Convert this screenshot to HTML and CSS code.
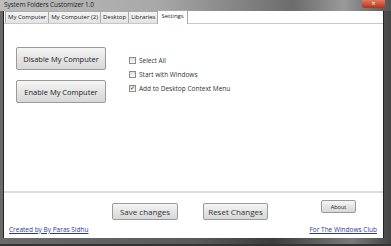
FILE: index.html
```html
<!DOCTYPE html>
<html lang="en">
  <head>
    <meta charset="UTF-8" />
    <title>System Folders Customizer 1.0</title>
    <link rel="stylesheet" href="styles.css">
  </head>
  <body>
    <div class="window">
      <div class="titlebar">
        <span class="title">System Folders Customizer 1.0</span>
        <span class="close">&#215;</span>
      </div>
      <div class="client">
        <div class="tabs">
          <span class="tab">My Computer</span>
          <span class="tab">My Computer (2)</span>
          <span class="tab">Desktop</span>
          <span class="tab">Libraries</span>
          <span class="tab active">Settings</span>
        </div>
        <div class="page">
          <div class="actions">
            <button class="btn big">Disable My Computer</button>
            <button class="btn big">Enable My Computer</button>
          </div>
          <div class="options">
            <label class="check"><span class="box"></span>Select All</label>
            <label class="check"><span class="box"></span>Start with Windows</label>
            <label class="check"><span class="box on">&#10003;</span>Add to Desktop Context Menu</label>
          </div>
        </div>
        <div class="footer">
          <a class="link" href="#">Created by By Paras Sidhu</a>
          <div class="center">
            <button class="btn wide">Save changes</button>
            <button class="btn wide">Reset Changes</button>
          </div>
          <div class="right">
            <button class="btn small">About</button>
            <a class="link" href="#">For The Windows Club</a>
          </div>
        </div>
      </div>
    </div>
  </body>
</html>
```

FILE: styles.css
```css
* {
  box-sizing: border-box;
}

html,
body {
  margin: 0;
  padding: 0;
  width: 391px;
  height: 246px;
  overflow: hidden;
  background: #555;
  font-family: "Open Sans", "DejaVu Sans", sans-serif;
}

.window {
  width: 391px;
  height: 246px;
  display: flex;
  flex-direction: column;
  background: linear-gradient(90deg, #6a6a6a, #5a5a5a 50%, #3c3c3c 70%, #7a7a7a 90%, #444);
  padding: 0 7px 6px 3px;
  border-bottom: 2px solid #333;
}

.titlebar {
  height: 11px;
  display: flex;
  align-items: flex-start;
  justify-content: space-between;
  margin: 0 -7px 0 -3px;
  background: linear-gradient(90deg, #bdbdbd, #a8a8a8 40%, #6c6c6c 75%, #9a9a9a 88%, #555);
}

.title {
  font-size: 6.5px;
  color: #1e1e1e;
  line-height: 10px;
  padding-left: 4px;
  letter-spacing: -0.1px;
}

.close {
  width: 23px;
  height: 8px;
  margin-right: 6px;
  border-radius: 0 0 3px 3px;
  background: linear-gradient(#e07a60, #b2321a);
  color: #fff;
  font-size: 7px;
  line-height: 8px;
  text-align: center;
}

.client {
  flex: 1;
  background: #fff;
  display: flex;
  flex-direction: column;
  border-left: 1px solid #222;
  border-right: 1px solid #222;
}

.tabs {
  display: flex;
  align-items: flex-end;
  height: 13px;
  padding-left: 1px;
  background: #fff;
  border-bottom: 1px solid #c8c8c8;
}

.tab {
  height: 12px;
  padding: 0 2px;
  font-size: 6px;
  line-height: 11px;
  color: #222;
  background: linear-gradient(#f4f4f4, #e2e2e2);
  border: 1px solid #aaa;
  border-bottom: none;
  margin-right: -1px;
}

.tab.active {
  height: 14px;
  background: #fff;
  margin-bottom: -1px;
  padding: 0 3px;
  line-height: 10px;
}

.page {
  height: 169px;
  display: flex;
  padding: 23px 0 0 12px;
  border-bottom: 2px solid #dcdcdc;
}

.actions {
  display: flex;
  flex-direction: column;
  gap: 10px;
}

.btn {
  font-family: inherit;
  color: #222;
  border: 1px solid #9a9a9a;
  border-radius: 2px;
  background: linear-gradient(#f6f6f6, #e4e4e4 50%, #d8d8d8);
  padding: 0;
}

.btn.big {
  width: 90px;
  height: 23px;
  font-size: 7.5px;
}

.options {
  display: flex;
  flex-direction: column;
  gap: 6px;
  padding: 9px 0 0 23px;
}

.check {
  display: flex;
  align-items: center;
  font-size: 6.5px;
  color: #333;
  height: 8px;
}

.box {
  width: 7px;
  height: 7px;
  border: 1px solid #8c8c8c;
  background: linear-gradient(#e0e0e0, #fafafa);
  margin-right: 3px;
  font-size: 6px;
  line-height: 5px;
  text-align: center;
  color: #222;
}

.footer {
  flex: 1;
  display: grid;
  grid-template-columns: 103px auto 1fr auto;
  align-items: end;
  padding: 0 6px 4px 5px;
}

.footer > .link {
  white-space: nowrap;
}

.center {
  display: flex;
  gap: 25px;
  align-self: start;
  margin-top: 10px;
}

.btn.wide {
  height: 17px;
  font-size: 8px;
  color: #333;
}

.btn.wide:first-child {
  width: 66px;
}

.btn.wide:last-child {
  width: 65px;
}

.right {
  grid-column: 4;
  display: flex;
  flex-direction: column;
  align-items: flex-end;
  gap: 12px;
}

.btn.small {
  width: 35px;
  height: 13px;
  font-size: 5.5px;
  margin-right: 21px;
}

.link {
  font-size: 6.5px;
  color: #2a3a9a;
  text-decoration: underline;
}
```
